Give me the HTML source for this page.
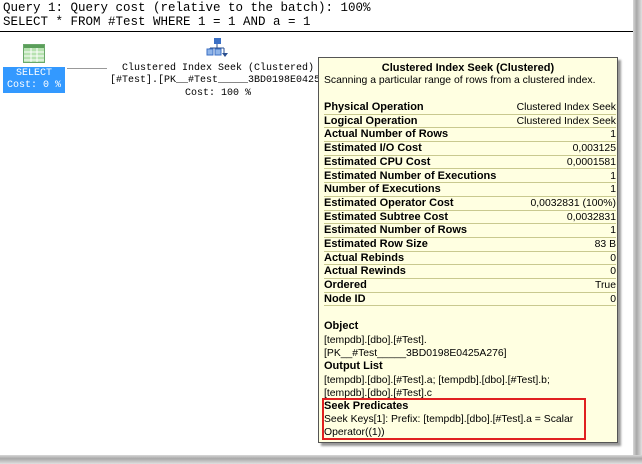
<!DOCTYPE html>
<html><head><style>
*{margin:0;padding:0;box-sizing:border-box}
body{width:642px;height:464px;position:relative;overflow:hidden;background:#fff;font-family:"Liberation Sans",sans-serif}
#shR{position:absolute;left:633px;top:0;width:9px;height:464px;background:linear-gradient(to right,#d8d8d8,#a8a8a8 40%,#e0e0e0)}
#shB{position:absolute;left:0;top:455px;width:642px;height:9px;background:linear-gradient(to bottom,#d8d8d8,#a8a8a8 40%,#e0e0e0)}
.mono{position:absolute;font-family:"Liberation Mono",monospace;font-size:10px;color:#000;white-space:pre;line-height:12px}
.big{font-size:12.5px;line-height:14px}
#sep{position:absolute;left:0;top:31px;width:633px;height:1px;background:#000}
#sel{position:absolute;left:3px;top:67px;width:62px;height:26px;background:#3399ff;color:#fff;font-family:"Liberation Mono",monospace;font-size:10px;text-align:center;line-height:12px;padding-top:1px}
#tip{position:absolute;left:318px;top:57px;width:300px;height:386px;background:#ffffe1;border:1px solid #555;box-shadow:3px 3px 2px #999;font-size:11px;color:#000}
.t{position:absolute;left:0;width:100%;text-align:center;font-weight:bold;top:4px}
.d{position:absolute;left:5px;top:17px;font-size:10.4px}
.row{position:absolute;left:5px;width:292px;height:13.7px;border-bottom:1px solid #c9c98f;line-height:13px}
.row b{float:left}.row span{float:right;font-size:10.4px}
.h{position:absolute;left:5px;font-weight:bold}
.p{position:absolute;left:5px;line-height:13px;font-size:10.4px}
#red{position:absolute;left:3px;top:340px;width:264px;height:42px;border:2px solid #e02020}
</style></head><body>
<div class="mono big" style="left:3px;top:1px">Query 1: Query cost (relative to the batch): 100%</div>
<div class="mono big" style="left:3px;top:15px">SELECT * FROM #Test WHERE 1 = 1 AND a = 1</div>
<div id="sep"></div>
<svg style="position:absolute;left:23px;top:44px" width="22" height="19"><rect x="0.5" y="0.5" width="21" height="18" fill="#b7e2b0" stroke="#6aa86a"/><rect x="1" y="1" width="20" height="3" fill="#5a9e5a"/><g stroke="#ffffff" stroke-width="1"><line x1="1" y1="8" x2="21" y2="8"/><line x1="1" y1="12" x2="21" y2="12"/><line x1="1" y1="16" x2="21" y2="16"/><line x1="8" y1="4" x2="8" y2="18"/><line x1="14" y1="4" x2="14" y2="18"/></g></svg>
<div id="sel">SELECT<br>Cost: 0 %</div>
<div style="position:absolute;left:67px;top:68px;width:40px;height:1px;background:#999"></div>
<svg style="position:absolute;left:205px;top:37px" width="26" height="21"><rect x="9" y="1" width="7" height="6" fill="#3b6fc4"/><path d="M12 7v4M5 11h14M5 11v3M19 11v6" stroke="#2a4f90" fill="none"/><rect x="2" y="12" width="6" height="6" fill="#8fb4e8" stroke="#3b6fc4"/><rect x="10" y="12" width="6" height="6" fill="#8fb4e8" stroke="#3b6fc4"/><path d="M17 16l3 4 3-4z" fill="#2a4f90"/></svg>
<div class="mono" style="left:122px;top:63px">Clustered Index Seek (Clustered)</div>
<div class="mono" style="left:110px;top:75px">[#Test].[PK__#Test_____3BD0198E0425</div>
<div class="mono" style="left:185px;top:88px">Cost: 100 %</div>
<div id="tip">
<div class="t">Clustered Index Seek (Clustered)</div>
<div class="d">Scanning a particular range of rows from a clustered index.</div>
<div class="row" style="top:43px"><b>Physical Operation</b><span>Clustered Index Seek</span></div>
<div class="row" style="top:56.7px"><b>Logical Operation</b><span>Clustered Index Seek</span></div>
<div class="row" style="top:70.4px"><b>Actual Number of Rows</b><span>1</span></div>
<div class="row" style="top:84.1px"><b>Estimated I/O Cost</b><span>0,003125</span></div>
<div class="row" style="top:97.8px"><b>Estimated CPU Cost</b><span>0,0001581</span></div>
<div class="row" style="top:111.5px"><b>Estimated Number of Executions</b><span>1</span></div>
<div class="row" style="top:125.2px"><b>Number of Executions</b><span>1</span></div>
<div class="row" style="top:138.9px"><b>Estimated Operator Cost</b><span>0,0032831 (100%)</span></div>
<div class="row" style="top:152.6px"><b>Estimated Subtree Cost</b><span>0,0032831</span></div>
<div class="row" style="top:166.3px"><b>Estimated Number of Rows</b><span>1</span></div>
<div class="row" style="top:180px"><b>Estimated Row Size</b><span>83 B</span></div>
<div class="row" style="top:193.7px"><b>Actual Rebinds</b><span>0</span></div>
<div class="row" style="top:207.4px"><b>Actual Rewinds</b><span>0</span></div>
<div class="row" style="top:221.1px"><b>Ordered</b><span>True</span></div>
<div class="row" style="top:234.8px"><b>Node ID</b><span>0</span></div>
<div class="h" style="top:262px">Object</div>
<div class="p" style="top:276px">[tempdb].[dbo].[#Test].<br>[PK__#Test_____3BD0198E0425A276]</div>
<div class="h" style="top:302px">Output List</div>
<div class="p" style="top:316px">[tempdb].[dbo].[#Test].a; [tempdb].[dbo].[#Test].b;<br>[tempdb].[dbo].[#Test].c</div>
<div class="h" style="top:342px">Seek Predicates</div>
<div class="p" style="top:355px">Seek Keys[1]: Prefix: [tempdb].[dbo].[#Test].a = Scalar<br>Operator((1))</div>
<div id="red"></div>
</div>
<div id="shR"></div><div id="shB"></div>
</body></html>
